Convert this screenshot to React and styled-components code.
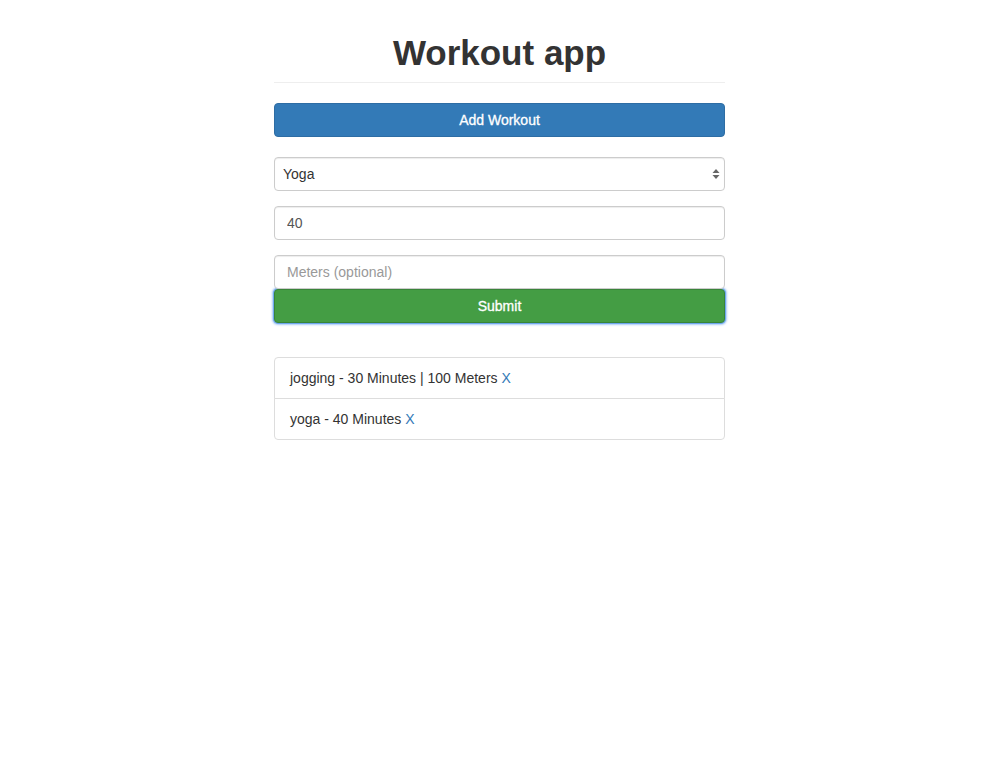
import React from "react";
import styled, { createGlobalStyle } from "styled-components";

const GlobalStyle = createGlobalStyle`
  body {
    margin: 0;
    background: #fff;
    color: #333;
    font-family: "Liberation Sans", Arial, sans-serif;
    font-size: 14px;
    line-height: 1.42857;
  }
`;

const Page = styled.div`
  padding-left: 4px;
`;

const Container = styled.div`
  width: 451px;
  margin: 0 auto;
`;

const Header = styled.div`
  padding: 33px 0 9px;
  border-bottom: 1px solid #eee;
  margin-bottom: 20px;
`;

const Title = styled.h1`
  margin: 0;
  font-size: 35px;
  line-height: 40px;
  font-weight: 700;
  text-align: center;
  color: #333;
`;

const Button = styled.button`
  display: block;
  width: 100%;
  height: 34px;
  padding: 6px 12px;
  font-family: inherit;
  font-size: 14px;
  line-height: 20px;
  color: #fff;
  -webkit-text-stroke: 0.3px #fff;
  border-radius: 4px;
  border: 1px solid ${({ $variant }) => ($variant === "success" ? "#398439" : "#2e6da4")};
  background: ${({ $variant }) => ($variant === "success" ? "#449d44" : "#337ab7")};
  box-shadow: ${({ $focused }) =>
    $focused ? "0 0 0 1px #6ea7ee, 0 0 2px 2px rgba(110, 167, 238, 0.6)" : "none"};
  outline: none;
  cursor: pointer;
`;

const Form = styled.form`
  margin-top: 20px;
  display: flex;
  flex-direction: column;
`;

const Group = styled.div`
  margin-bottom: ${({ $gap }) => $gap}px;
  position: relative;
`;

const Select = styled.select`
  display: block;
  width: 100%;
  height: 34px;
  padding: 6px 24px 6px 8px;
  font-family: inherit;
  font-size: 14px;
  color: #333;
  background: #fff;
  border: 1px solid #ccc;
  border-radius: 4px;
  box-shadow: inset 0 1px 1px rgba(0, 0, 0, 0.075);
  appearance: none;
  -webkit-appearance: none;
`;

const Arrows = styled.svg`
  position: absolute;
  right: 5px;
  top: 11px;
  pointer-events: none;
`;

const Input = styled.input`
  display: block;
  width: 100%;
  box-sizing: border-box;
  height: 34px;
  padding: 6px 12px;
  font-family: inherit;
  font-size: 14px;
  color: #555;
  background: #fff;
  border: 1px solid #ccc;
  border-radius: 4px;
  box-shadow: inset 0 1px 1px rgba(0, 0, 0, 0.075);
  outline: none;
  &::placeholder {
    color: #999;
  }
`;

const List = styled.ul`
  margin: 34px 0 0;
  padding: 0;
  list-style: none;
`;

const Item = styled.li`
  padding: 10px 15px;
  border: 1px solid #ddd;
  margin-bottom: -1px;
  background: #fff;
  color: #333;
  line-height: 20px;
  &:first-child {
    border-radius: 4px 4px 0 0;
  }
  &:last-child {
    border-radius: 0 0 4px 4px;
    margin-bottom: 0;
  }
`;

const Remove = styled.a`
  color: #337ab7;
  text-decoration: none;
  cursor: pointer;
`;

const workouts = [
  { type: "jogging", minutes: 30, meters: 100 },
  { type: "yoga", minutes: 40 },
];

export default function App() {
  return (
    <Page>
      <GlobalStyle />
      <Container>
        <Header>
          <Title>Workout app</Title>
        </Header>
        <Button type="button">Add Workout</Button>
        <Form onSubmit={(e) => e.preventDefault()}>
          <Group $gap={15}>
            <Select defaultValue="Yoga">
              <option>Jogging</option>
              <option>Yoga</option>
            </Select>
            <Arrows width="8" height="12" viewBox="0 0 8 12">
              <path d="M4 1 L7.5 5 L0.5 5 Z" fill="#666" />
              <path d="M4 11 L7.5 7 L0.5 7 Z" fill="#666" />
            </Arrows>
          </Group>
          <Group $gap={15}>
            <Input type="text" defaultValue="40" />
          </Group>
          <Group $gap={0}>
            <Input type="text" placeholder="Meters (optional)" />
          </Group>
          <Button type="submit" $variant="success" $focused>
            Submit
          </Button>
        </Form>
        <List>
          {workouts.map((w, i) => (
            <Item key={i}>
              {w.type} - {w.minutes} Minutes
              {w.meters ? ` | ${w.meters} Meters` : ""} <Remove>X</Remove>
            </Item>
          ))}
        </List>
      </Container>
    </Page>
  );
}
